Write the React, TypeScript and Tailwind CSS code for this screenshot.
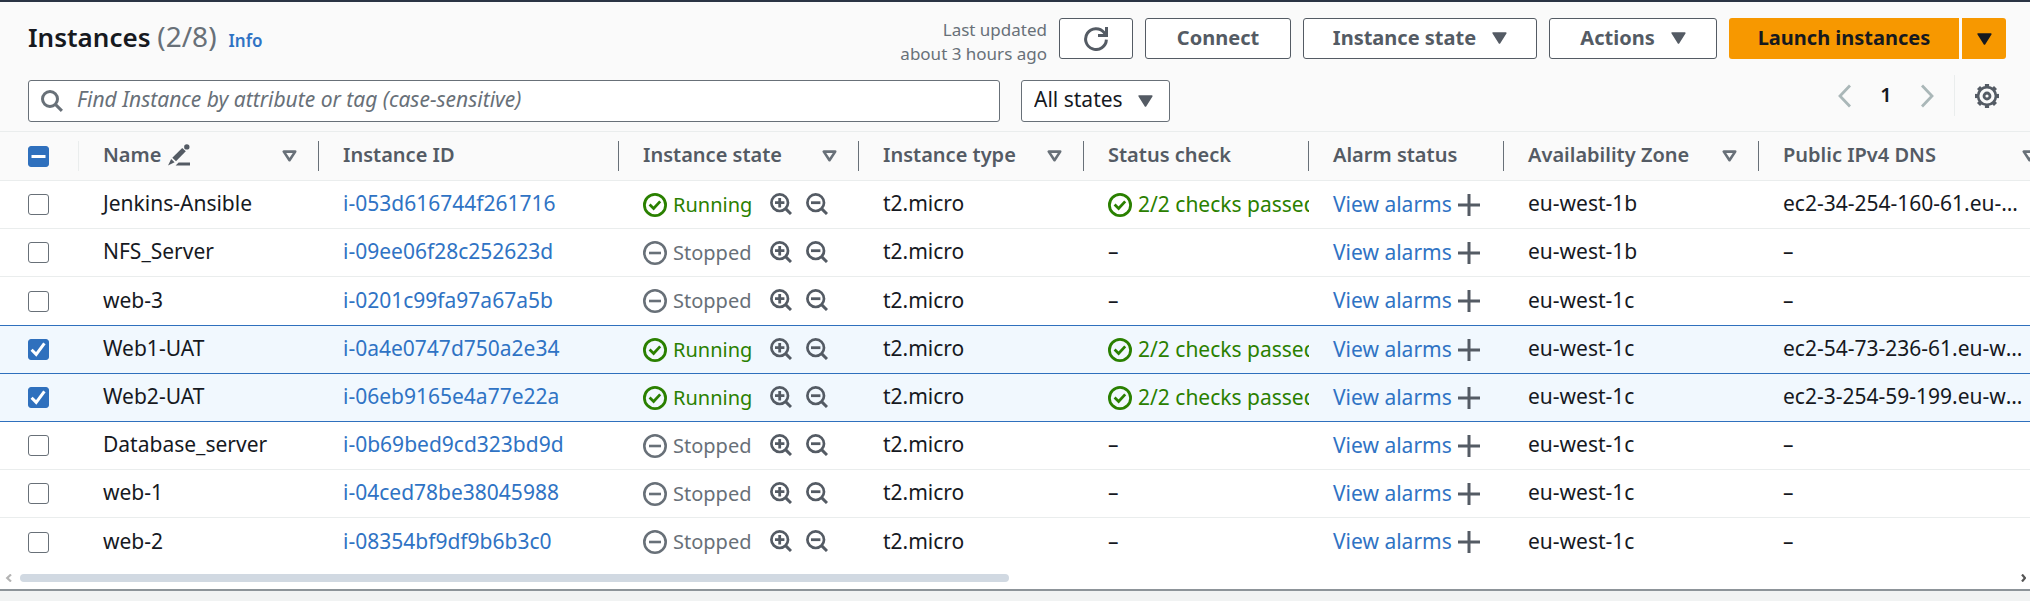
import { useState } from "react";
import type { ReactNode } from "react";

type Instance = {
  name: string;
  id: string;
  running: boolean;
  zone: string;
  dns?: string;
  selected: boolean;
};

const INSTANCES: Instance[] = [
  { name: "Jenkins-Ansible", id: "i-053d616744f261716", running: true, zone: "eu-west-1b", dns: "ec2-34-254-160-61.eu-west-1.compute.amazonaws.com", selected: false },
  { name: "NFS_Server", id: "i-09ee06f28c252623d", running: false, zone: "eu-west-1b", selected: false },
  { name: "web-3", id: "i-0201c99fa97a67a5b", running: false, zone: "eu-west-1c", selected: false },
  { name: "Web1-UAT", id: "i-0a4e0747d750a2e34", running: true, zone: "eu-west-1c", dns: "ec2-54-73-236-61.eu-west-1.compute.amazonaws.com", selected: true },
  { name: "Web2-UAT", id: "i-06eb9165e4a77e22a", running: true, zone: "eu-west-1c", dns: "ec2-3-254-59-199.eu-west-1.compute.amazonaws.com", selected: true },
  { name: "Database_server", id: "i-0b69bed9cd323bd9d", running: false, zone: "eu-west-1c", selected: false },
  { name: "web-1", id: "i-04ced78be38045988", running: false, zone: "eu-west-1c", selected: false },
  { name: "web-2", id: "i-08354bf9df9b6b3c0", running: false, zone: "eu-west-1c", selected: false },
];

function Caret() {
  return (
    <svg className="h-3 w-[15px] shrink-0" viewBox="0 0 15 12" aria-hidden="true">
      <path d="M1.2 1h12.6L7.5 11z" fill="currentColor" stroke="currentColor" strokeWidth="1.6" strokeLinejoin="round" />
    </svg>
  );
}

function FilterCaret() {
  return (
    <svg className="h-3 w-[15px] shrink-0" viewBox="0 0 15 12" aria-hidden="true">
      <path d="M1.8 1.6h11.4L7.5 10.2z" fill="none" stroke="#687078" strokeWidth="2.6" strokeLinejoin="round" />
    </svg>
  );
}

function RefreshIcon() {
  return (
    <svg className="size-6" viewBox="0 0 24 24" fill="none" stroke="currentColor" strokeWidth="3" aria-hidden="true">
      <path d="M22.4 12.6A10.4 10.4 0 1 1 20 5.4L22 7.6" />
      <path d="M22.5 0v8.5H14" />
    </svg>
  );
}

function SearchIcon() {
  return (
    <svg className="size-[22px] shrink-0" viewBox="0 0 22 22" fill="none" stroke="currentColor" strokeWidth="3" aria-hidden="true">
      <circle cx="9" cy="9" r="7.5" />
      <path d="M14.4 14.4l6.5 6.5" />
    </svg>
  );
}

function Magnifier({ plus = false }: { plus?: boolean }) {
  return (
    <svg className="size-[22px]" viewBox="0 0 22 22" fill="none" stroke="currentColor" aria-hidden="true">
      <circle cx="9.7" cy="9.7" r="8.3" strokeWidth="2.7" />
      <path d="M15.6 15.6l5.4 5.4" strokeWidth="3" />
      <path d={plus ? "M5 9.7h9.4M9.7 5v9.4" : "M5 9.7h9.4"} strokeWidth="2.8" />
    </svg>
  );
}

function CheckCircle() {
  return (
    <svg className="size-6 shrink-0" viewBox="0 0 24 24" fill="none" stroke="currentColor" strokeWidth="2.8" aria-hidden="true">
      <circle cx="12" cy="12" r="10.6" />
      <path d="M6.6 11.6l4 3.8 6.6-7" />
    </svg>
  );
}

function StopCircle() {
  return (
    <svg className="size-6 shrink-0" viewBox="0 0 24 24" fill="none" stroke="currentColor" strokeWidth="2.6" aria-hidden="true">
      <circle cx="12" cy="12" r="10.7" />
      <path d="M6 12h12" />
    </svg>
  );
}

function EditIcon() {
  return (
    <svg className="size-[22px]" viewBox="0 0 22 22" fill="currentColor" aria-hidden="true">
      <path d="M14.2 3.9l3.6 3.4L8 17.2l-3.7-3.5z" />
      <path d="M3.2 15l3.4 3.3L0 21.6z" />
      <circle cx="18.8" cy="2.9" r="2.7" />
      <path d="M10.6 18.4H22v3.2H7.6z" />
    </svg>
  );
}

function PlusIcon() {
  return (
    <svg className="size-[22px]" viewBox="0 0 22 22" stroke="currentColor" strokeWidth="3" aria-hidden="true">
      <path d="M0 11h22M11 0v22" />
    </svg>
  );
}

function Chevron({ right = false }: { right?: boolean }) {
  return (
    <svg className="h-6 w-[13px]" viewBox="0 0 13 24" fill="none" stroke="currentColor" strokeWidth="2.8" aria-hidden="true">
      <path d={right ? "M1 1.500L11 12 1 22.500" : "M12 1.500L2 12l10 10.500"} />
    </svg>
  );
}

const GEAR_TEETH = Array.from({ length: 8 }, (_, i) => i * 45);

function GearIcon() {
  return (
    <svg className="size-6" viewBox="0 0 24 24" fill="none" stroke="currentColor" aria-hidden="true">
      {GEAR_TEETH.map((angle) => (
        <path key={angle} d="M9.9 1.4h4.2" strokeWidth="2.8" strokeLinejoin="round" transform={`rotate(${angle} 12 12)`} />
      ))}
      <circle cx="12" cy="12" r="8.9" strokeWidth="2.6" />
      <circle cx="12" cy="12" r="3" strokeWidth="2.8" />
    </svg>
  );
}

function Checkbox({ label, checked, mixed = false, onChange }: { label: string; checked: boolean; mixed?: boolean; onChange: () => void }) {
  const filled = checked || mixed;
  return (
    <label className="grid size-[21px] cursor-pointer">
      <input
        type="checkbox"
        aria-label={label}
        checked={checked}
        onChange={onChange}
        className={`col-start-1 row-start-1 size-[21px] appearance-none rounded-[3px] border ${filled ? "border-[#2f70bd] bg-[#2f70bd]" : "border-[#687078] bg-white"}`}
      />
      {filled && (
        <svg className="pointer-events-none col-start-1 row-start-1 size-[21px]" viewBox="0 0 21 21" fill="none" stroke="#fff" strokeWidth="3" aria-hidden="true">
          <path d={mixed ? "M3.500 10.500h14" : "M3.6 10.8l4.6 4.6 8.2-11"} />
        </svg>
      )}
    </label>
  );
}

function ActionButton({ children, className }: { children: ReactNode; className: string }) {
  return (
    <button type="button" className={`flex h-[41px] items-center justify-center rounded-[3px] border border-[#545b64] bg-white pb-0.5 text-xl font-bold text-[#545b64] ${className}`}>
      {children}
    </button>
  );
}

function HeaderCell({ children, filter = false, divider = "dark" }: { children: ReactNode; filter?: boolean; divider?: "dark" | "none" }) {
  return (
    <th scope="col" className="border-b border-[#eaeded] p-0 text-left font-semibold">
      <div className={`flex h-[30px] items-center justify-between pr-[21px] pl-6 whitespace-nowrap ${divider === "dark" ? "border-r border-[#687078]" : ""}`}>
        <span className="flex items-center gap-[7px] pb-0.5">{children}</span>
        {filter && <FilterCaret />}
      </div>
    </th>
  );
}

export default function App() {
  const [rows, setRows] = useState(INSTANCES);
  const count = rows.filter((r) => r.selected).length;
  const toggle = (id: string) => setRows(rows.map((r) => (r.id === id ? { ...r, selected: !r.selected } : r)));
  const toggleAll = () => setRows(rows.map((r) => ({ ...r, selected: count !== rows.length })));

  return (
    <div className="min-h-screen bg-[#f1f3f3] font-['Noto_Sans',sans-serif] text-xl text-[#16191f]">
      <section className="border-t-2 border-b-2 border-t-[#2a3444] border-b-[#8d9499] bg-white">
        <div className="bg-[#fafafa]">
          <header className="flex items-start justify-between gap-6 pt-4 pr-6 pl-7">
            <div className="flex items-baseline gap-2 whitespace-nowrap">
              <h1 className="text-[26px] leading-9 font-semibold">
                Instances <span className="text-[28px] font-normal text-[#687078]">({count}/{rows.length})</span>
              </h1>
              <a href="#info" className="pl-1 text-[17px] font-semibold text-[#2f73c4]">Info</a>
            </div>
            <div className="flex items-start gap-3">
              <p className="text-right text-[17px] leading-6 whitespace-nowrap text-[#687078]">
                Last updated
                <br />
                about 3 hours ago
              </p>
              <button type="button" aria-label="Refresh" className="flex h-[41px] w-[74px] items-center justify-center rounded-[3px] border border-[#545b64] bg-white text-[#545b64]">
                <RefreshIcon />
              </button>
              <ActionButton className="w-[146px]">Connect</ActionButton>
              <ActionButton className="w-[234px] gap-4">Instance state <Caret /></ActionButton>
              <ActionButton className="w-[168px] gap-4">Actions <Caret /></ActionButton>
              <div className="flex gap-[3px]">
                <button type="button" className="h-[41px] w-[230px] rounded-l-[3px] bg-[#f79800] pb-0.5 text-xl font-bold">Launch instances</button>
                <button type="button" aria-label="More launch options" className="flex h-[41px] w-11 items-center justify-center rounded-r-[3px] bg-[#f79800]">
                  <Caret />
                </button>
              </div>
            </div>
          </header>

          <div className="flex items-start gap-[21px] pt-[14px] pr-6 pb-[9px] pl-7">
            <label className="flex h-[42px] max-w-[972px] flex-1 items-center gap-[14px] rounded-[3px] border border-[#687078] bg-white px-3 text-[21px] text-[#687078]">
              <SearchIcon />
              <input
                type="search"
                aria-label="Find Instance"
                placeholder="Find Instance by attribute or tag (case-sensitive)"
                className="min-w-0 flex-1 bg-transparent pb-0.5 outline-none placeholder:text-[#687078] placeholder:italic"
              />
            </label>
            <div className="grid h-[42px] w-[149px] items-center rounded-[3px] border border-[#687078] bg-white">
              <select aria-label="State filter" className="col-start-1 row-start-1 w-full appearance-none bg-transparent pb-0.5 pl-3 text-[21px] outline-none">
                <option>All states</option>
                <option>Running</option>
                <option>Stopped</option>
              </select>
              <span className="pointer-events-none col-start-1 row-start-1 justify-self-end pr-4 text-[#545b64]">
                <Caret />
              </span>
            </div>
            <div className="-mt-[5px] ml-auto flex h-[41px] items-center">
              <button type="button" aria-label="Previous page" className="text-[#aab7b8]"><Chevron /></button>
              <button type="button" aria-current="page" className="w-[70px] pb-0.5 text-center text-xl font-semibold">1</button>
              <button type="button" aria-label="Next page" className="text-[#aab7b8]"><Chevron right /></button>
              <span className="mx-5 h-[41px] border-l border-[#eaeded]" />
              <button type="button" aria-label="Preferences" className="mr-[7px] text-[#545b64]"><GearIcon /></button>
            </div>
          </div>
        </div>

        <div className="overflow-x-auto border-t border-[#eaeded] [scrollbar-width:none]">
          <table className="w-full min-w-[2058px] table-fixed border-separate border-spacing-0">
            <colgroup>
              <col className="w-[79px]" />
              <col className="w-60" />
              <col className="w-[300px]" />
              <col className="w-60" />
              <col className="w-[225px]" />
              <col className="w-[225px]" />
              <col className="w-[195px]" />
              <col className="w-[255px]" />
              <col />
            </colgroup>
            <thead className="bg-[#fafafa] text-[#545b64]">
              <tr className="h-[49px]">
                <th scope="col" className="border-b border-[#eaeded] p-0">
                  <div className="flex h-[30px] items-center border-r border-[#eaeded] pl-7">
                    <Checkbox label="Select all instances" checked={count === rows.length} mixed={count > 0 && count < rows.length} onChange={toggleAll} />
                  </div>
                </th>
                <HeaderCell filter>Name <EditIcon /></HeaderCell>
                <HeaderCell>Instance ID</HeaderCell>
                <HeaderCell filter>Instance state</HeaderCell>
                <HeaderCell filter>Instance type</HeaderCell>
                <HeaderCell>Status check</HeaderCell>
                <HeaderCell>Alarm status</HeaderCell>
                <HeaderCell filter>Availability Zone</HeaderCell>
                <HeaderCell filter divider="none">Public IPv4 DNS</HeaderCell>
              </tr>
            </thead>
            <tbody className="text-[21px] leading-7">
              {rows.map((row, i) => {
                const next = rows[i + 1];
                const last = !next;
                const startsSelection = !row.selected && !!next && next.selected;
                const line = row.selected || startsSelection ? "border-b border-[#2f70bd]" : last ? "" : "border-b border-[#eaeded]";
                const iconCell = `${line} overflow-hidden p-0 pl-6 whitespace-nowrap`;
                const textCell = `${line} overflow-hidden p-0 pb-[3px] pl-6 whitespace-nowrap`;
                return (
                  <tr key={row.id} className={`${startsSelection ? "h-[49px]" : "h-12"} ${row.selected ? "bg-[#f1f8fe]" : "bg-white"}`}>
                    <td className={`${line} p-0 pl-7`}>
                      <Checkbox label={`Select ${row.name}`} checked={row.selected} onChange={() => toggle(row.id)} />
                    </td>
                    <td className={textCell}>{row.name}</td>
                    <td className={textCell}>
                      <a href={`#${row.id}`} className="text-[#2f73c4]">{row.id}</a>
                    </td>
                    <td className={iconCell}>
                      <div className="flex items-center text-[#545b64]">
                        <span className={`flex w-[127px] items-center gap-[6px] text-xl ${row.running ? "text-[#2a8000]" : "text-[#687078]"}`}>
                          {row.running ? <CheckCircle /> : <StopCircle />}
                          {row.running ? "Running" : "Stopped"}
                        </span>
                        <span className="flex gap-[14px] pb-0.5">
                          <button type="button" aria-label="Filter by this state"><Magnifier plus /></button>
                          <button type="button" aria-label="Exclude this state"><Magnifier /></button>
                        </span>
                      </div>
                    </td>
                    <td className={textCell}>t2.micro</td>
                    {row.running ? (
                      <td className={iconCell}>
                        <span className="flex items-center gap-[6px] text-[#2a8000]">
                          <CheckCircle />
                          <span className="pb-0.5">2/2 checks passed</span>
                        </span>
                      </td>
                    ) : (
                      <td className={textCell}>–</td>
                    )}
                    <td className={iconCell}>
                      <span className="flex items-center gap-[6px] text-[#545b64]">
                        <a href="#alarms" className="pb-0.5 text-[#2f73c4]">View alarms</a>
                        <button type="button" aria-label="Create alarm"><PlusIcon /></button>
                      </span>
                    </td>
                    <td className={textCell}>{row.zone}</td>
                    <td className={`${line} truncate p-0 pr-[30px] pb-[3px] pl-6`}>{row.dns ?? "–"}</td>
                  </tr>
                );
              })}
            </tbody>
          </table>
        </div>

        <div className="flex h-[23px] items-center gap-2 px-1">
          <svg className="h-2 w-[8px] shrink-0" viewBox="0 0 8 8" fill="none" stroke="#b4b4b4" strokeWidth="2.2" aria-hidden="true">
            <path d="M7 .5L3.2 4 7 7.500" />
          </svg>
          <div className="flex-1 pr-3">
            <div className="h-2 w-1/2 rounded-full bg-[#d1d9e2]" />
          </div>
          <svg className="h-2 w-[8px] shrink-0" viewBox="0 0 8 8" fill="none" stroke="#555" strokeWidth="2.2" aria-hidden="true">
            <path d="M4 .5L7 4 4 7.500" />
          </svg>
        </div>
      </section>
    </div>
  );
}
